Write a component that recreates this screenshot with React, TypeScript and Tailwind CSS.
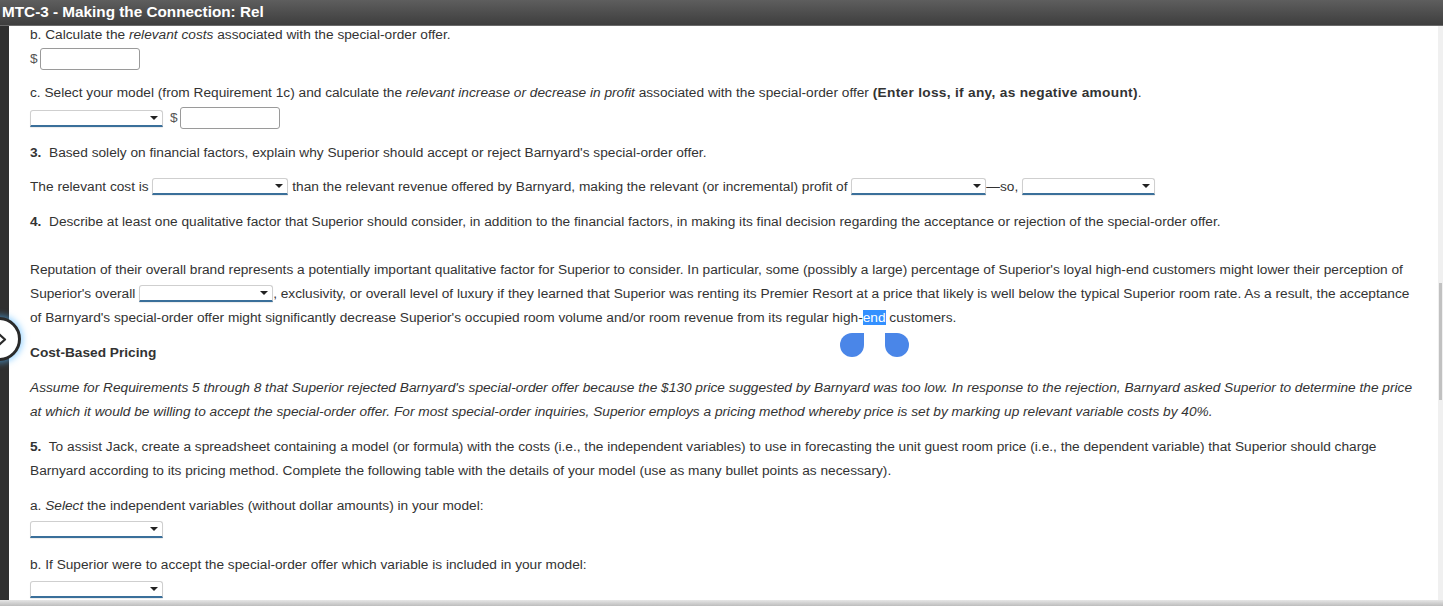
import React from 'react';

// Dropdown used inline throughout the assignment page
const Dropdown: React.FC<{ w?: string }> = ({ w = 'w-[133px]' }) => (
  <span
    className={`relative inline-block h-[17px] ${w} rounded-t-[3px] border border-[#cfcfcf] border-b-2 border-b-[#3a6f9a] bg-white align-[-4px] shadow-[0_1px_1px_rgba(0,0,0,0.08)]`}
  >
    <span className="absolute right-[4px] top-[5px] h-0 w-0 border-x-[4px] border-t-[4px] border-x-transparent border-t-[#222]" />
  </span>
);

const MoneyInput: React.FC = () => (
  <span className="inline-flex items-center">
    <span className="mr-[2px] text-[#555]">$</span>
    <span className="inline-block h-[22px] w-[100px] rounded-[3px] border border-[#9a9a9a] bg-white" />
  </span>
);

export default function App() {
  return (
    <div
      className="relative flex h-[613px] w-[1443px] flex-col overflow-hidden bg-white text-[13.7px] text-[#333]"
      style={{ fontFamily: '"Liberation Sans", Arial, sans-serif' }}
    >
      {/* title bar */}
      <div className="flex h-[26px] shrink-0 items-center border-b border-b-[#6a6a6a] bg-gradient-to-b from-[#5e5e5e] to-[#3e3e3e] pl-[2px]">
        <span className="text-[15.3px] font-bold text-white">MTC-3 - Making the Connection: Rel</span>
      </div>

      <div className="flex min-h-0 flex-1">
        <div className="w-[9px] shrink-0 bg-[#2f2f2f]" />

        <div className="min-w-0 flex-1 pl-[21px] pr-[14px]">
          <p className="leading-[18px]">
            b. Calculate the <i>relevant costs</i> associated with the special-order offer.
          </p>
          <div className="mt-[4px] flex h-[22px] items-center">
            <MoneyInput />
          </div>

          <p className="mt-[14px] leading-[18px]">
            c. Select your model (from Requirement 1c) and calculate the{' '}
            <i>relevant increase or decrease in profit</i> associated with the special-order offer{' '}
            <b className="tracking-[0.3px]">(Enter loss, if any, as negative amount)</b>.
          </p>
          <div className="mt-[5px] flex h-[22px] items-center gap-[7px]">
            <Dropdown />
            <MoneyInput />
          </div>

          <p className="mt-[15px] leading-[18px]">
            <b>3.</b>&nbsp; Based solely on financial factors, explain why Superior should accept or reject Barnyard's
            special-order offer.
          </p>

          <p className="mt-[16px] leading-[18px]">
            The relevant cost is <Dropdown w="w-[136px]" /> than the relevant revenue offered by Barnyard, making the
            relevant (or incremental) profit of <Dropdown w="w-[135px]" />—so, <Dropdown />
          </p>

          <p className="mt-[17px] leading-[18px]">
            <b>4.</b>&nbsp; Describe at least one qualitative factor that Superior should consider, in addition to the
            financial factors, in making its final decision regarding the acceptance or rejection of the special-order
            offer.
          </p>

          <p className="mt-[27px] leading-[24px]">
            Reputation of their overall brand represents a potentially important qualitative factor for Superior to
            consider. In particular, some (possibly a large) percentage of Superior's loyal high-end customers might
            lower their perception of Superior's overall <Dropdown w="w-[134px]" />, exclusivity, or overall level of
            luxury if they learned that Superior was renting its Premier Resort at a price that likely is well below the
            typical Superior room rate. As a result, the acceptance of Barnyard's special-order offer might
            significantly decrease Superior's occupied room volume and/or room revenue from its regular high-
            <span className="bg-[#3390ff] text-white">end</span> customers.
          </p>

          <p className="mt-[14px] font-bold leading-[18px]">Cost-Based Pricing</p>

          <p className="mt-[14px] italic leading-[24px]">
            Assume for Requirements 5 through 8 that Superior rejected Barnyard's special-order offer because the $130
            price suggested by Barnyard was too low. In response to the rejection, Barnyard asked Superior to determine
            the price at which it would be willing to accept the special-order offer. For most special-order inquiries,
            Superior employs a pricing method whereby price is set by marking up relevant variable costs by 40%.
          </p>

          <p className="mt-[11px] leading-[24px]">
            <b>5.</b>&nbsp; To assist Jack, create a spreadsheet containing a model (or formula) with the costs (i.e.,
            the independent variables) to use in forecasting the unit guest room price (i.e., the dependent variable)
            that Superior should charge Barnyard according to its pricing method. Complete the following table with the
            details of your model (use as many bullet points as necessary).
          </p>

          <p className="mt-[14px] leading-[18px]">
            a. <i>Select</i> the independent variables (without dollar amounts) in your model:
          </p>
          <div className="mt-[6px] flex">
            <Dropdown />
          </div>

          <p className="mt-[18px] leading-[18px]">
            b. If Superior were to accept the special-order offer which variable is included in your model:
          </p>
          <div className="mt-[7px] flex">
            <Dropdown />
          </div>
        </div>

        {/* scrollbar */}
        <div className="relative w-[5px] shrink-0 bg-[#f0f0f0]">
          <div className="absolute left-[1px] top-[257px] h-[117px] w-[3px] bg-[#c1c1c1]" />
        </div>
      </div>

      <div className="h-[6px] shrink-0 bg-gradient-to-b from-[#e6e6e6] to-[#bdbdbd]" />
      <div className="h-[7px] shrink-0 bg-white" />

      {/* side navigation toggle */}
      <div className="absolute left-[-23px] top-[317px] flex h-[44px] w-[44px] items-center justify-end rounded-full border-[3px] border-[#2a2a2a] bg-white pr-[11px] shadow-[0_0_6px_2px_rgba(80,180,255,0.55)]">
        <svg width="9" height="13" viewBox="0 0 9 13" fill="none">
          <path d="M1.5 1.5 L7 6.5 L1.5 11.5" stroke="#2a2a2a" strokeWidth="2.2" strokeLinecap="round" strokeLinejoin="round" />
        </svg>
      </div>

      {/* text selection handles */}
      <div className="absolute left-[840px] top-[333px] h-[24px] w-[24px] rounded-full rounded-tr-none bg-[#4a86e8]" />
      <div className="absolute left-[885px] top-[333px] h-[24px] w-[24px] rounded-full rounded-tl-none bg-[#4a86e8]" />
    </div>
  );
}
